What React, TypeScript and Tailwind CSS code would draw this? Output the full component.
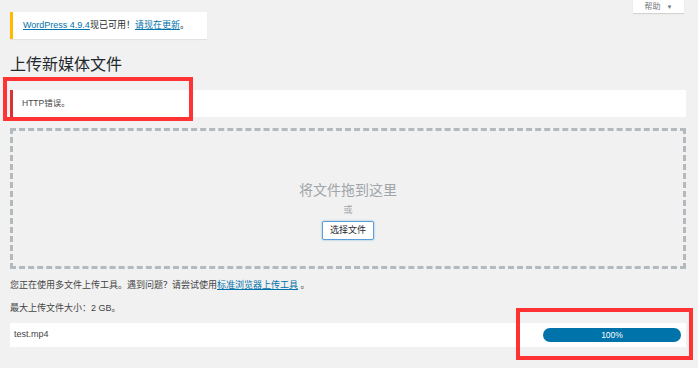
const font = "font-['Liberation_Sans','Noto_Sans_CJK_SC',sans-serif]";

export default function App() {
  return (
    <div className={`relative w-[698px] h-[368px] overflow-hidden bg-[#f1f1f1] text-[#444] ${font}`}>
      {/* Help tab */}
      <div className="absolute top-0 right-[14px] w-[51px] h-[13px] bg-white shadow-[0_1px_1px_rgba(0,0,0,0.12)] flex items-center justify-center gap-[6px] text-[8px] leading-none text-[#72777c]">
        <span>帮助</span>
        <span className="text-[6px]">▼</span>
      </div>

      <div className="flex flex-col pl-[10px] pr-[12px]">
        {/* Update nag */}
        <div className="mt-[12px] w-[197px] h-[27px] bg-white border-l-[3px] border-[#ffb900] shadow-[0_1px_1px_rgba(0,0,0,0.06)] flex items-center pl-[10px] text-[9px] text-[#23282d]">
          <a className="text-[#0073aa] underline">WordPress 4.9.4</a>
          <span>现已可用！</span>
          <a className="text-[#0073aa] underline">请现在更新</a>
          <span>。</span>
        </div>

        <h1 className="mt-[16px] text-[16px] leading-[20px] text-[#23282d]">上传新媒体文件</h1>

        {/* Error notice */}
        <div className="mt-[15px] h-[27px] bg-white border-l-[3px] border-[#dc3232] flex items-center pl-[9px] text-[8.5px] text-[#444]">
          HTTP错误。
        </div>

        {/* Drop zone */}
        <div className="mt-[11px] h-[141px] border-[3px] border-dashed border-[#b4b9be] flex flex-col items-center pt-[50px]">
          <div className="text-[14px] leading-[18px] text-[#a0a5aa]">将文件拖到这里</div>
          <div className="mt-[5px] text-[9px] leading-[12px] text-[#a0a5aa]">或</div>
          <button className="mt-[5px] w-[52px] h-[19px] bg-white border border-[#5b9dd9] rounded-[2px] shadow-[0_0_2px_rgba(30,140,190,0.6)] text-[9px] text-[#23282d]">
            选择文件
          </button>
        </div>

        <p className="mt-[10px] text-[9px] leading-[12px]">
          您正在使用多文件上传工具。遇到问题？请尝试使用<a className="text-[#0073aa] underline">标准浏览器上传工具</a> 。
        </p>
        <p className="mt-[11px] text-[9px] leading-[12px]">最大上传文件大小：2 GB。</p>

        {/* File row */}
        <div className="mt-[9px] h-[24px] bg-white flex items-center justify-between pl-[4px] pr-[5px]">
          <span className="text-[9px]">test.mp4</span>
          <div className="w-[138px] h-[14px] rounded-full bg-[#0073aa] flex items-center justify-center text-[8.5px] text-white">
            100%
          </div>
        </div>
      </div>

      {/* Annotation boxes */}
      <div className="absolute left-[3px] top-[77px] w-[190px] h-[44px] border-[4px] border-[#f33]" />
      <div className="absolute left-[516px] top-[308px] w-[177px] h-[52px] border-[4px] border-[#f33]" />
    </div>
  );
}
